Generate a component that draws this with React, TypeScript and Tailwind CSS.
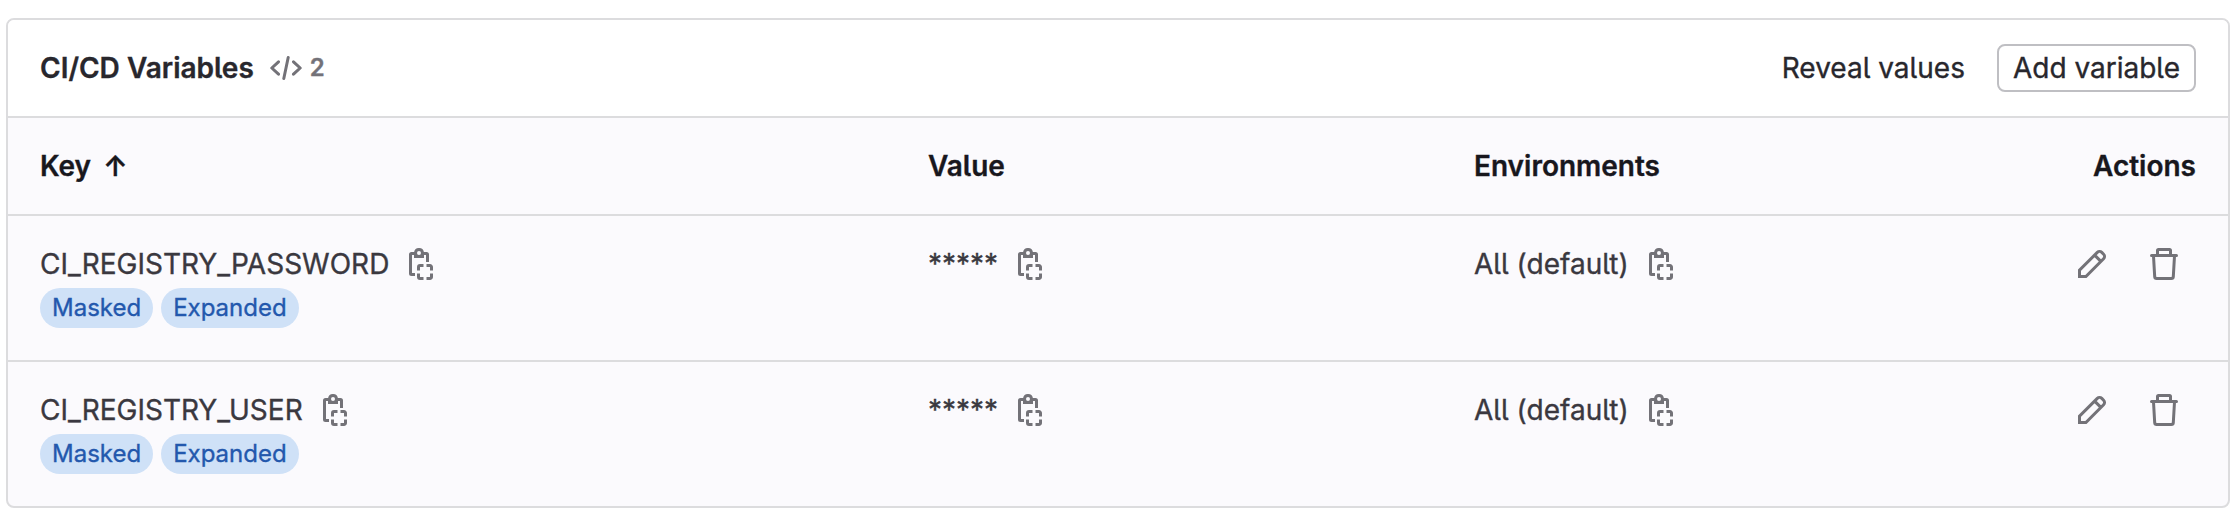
import type { ReactNode } from "react";

const rows = ["CI_REGISTRY_PASSWORD", "CI_REGISTRY_USER"];

function CodeIcon() {
  return (
    <svg className="size-8" viewBox="0 0 16 16" fill="none" stroke="currentColor" strokeWidth="1.5" strokeLinecap="round" strokeLinejoin="round">
      <path d="M9.1 2.75 6.9 13.25M4.25 4.9.9 8l3.35 3.1M11.75 4.9 15.1 8l-3.35 3.1" />
    </svg>
  );
}

function CopyIcon() {
  return (
    <svg className="size-8 shrink-0" viewBox="0 0 16 16" fill="none" stroke="currentColor" strokeWidth="1.5">
      <path
        fill="currentColor"
        stroke="none"
        fillRule="evenodd"
        d="M4.55 2a2.5 2.5 0 0 1 4.9 0H9.5v3h-5V2zM7 3.5a1 1 0 1 0 0-2 1 1 0 0 0 0 2"
      />
      <path d="M5 2.75H3.25a.5.5 0 0 0-.5.5v9.5a.5.5 0 0 0 .5.5H5M9 2.75h1.75a.5.5 0 0 1 .5.5V7" />
      <path d="M6.75 11.25V9.5a.75.75 0 0 1 .75-.75h1.75M10.75 8.75h1.75a.75.75 0 0 1 .75.75v1.75M13.25 12.75v1.75a.75.75 0 0 1-.75.75h-1.75M9.25 15.25H7.5a.75.75 0 0 1-.75-.75v-1.75" />
    </svg>
  );
}

function PencilIcon() {
  return (
    <svg className="size-8" viewBox="0 0 16 16" fill="none" stroke="currentColor" strokeWidth="1.5">
      <path d="M1.75 14.25v-3.2l8.9-8.85a1.6 1.6 0 0 1 2.25 0l.9.9a1.6 1.6 0 0 1 0 2.25L4.95 14.25zM9.3 3.55l3.15 3.15" />
    </svg>
  );
}

function TrashIcon() {
  return (
    <svg className="size-8" viewBox="0 0 16 16" fill="none" stroke="currentColor" strokeWidth="1.5" strokeLinecap="round" strokeLinejoin="round">
      <path d="M1.75 3.75h12.5M4.75 3.5V1.25a.5.5 0 0 1 .5-.5h5.5a.5.5 0 0 1 .5.5V3.5M2.75 4l.6 10.3a1 1 0 0 0 1 .95h7.3a1 1 0 0 0 1-.95L13.25 4" />
    </svg>
  );
}

function Copyable({ children }: { children: ReactNode }) {
  return (
    <div className="flex h-8 items-center gap-4">
      <span>{children}</span>
      <button className="text-[#737278]">
        <CopyIcon />
      </button>
    </div>
  );
}

function Badge({ children }: { children: ReactNode }) {
  return (
    <span className="flex h-10 items-center rounded-full bg-[#cfe1f7] px-3 text-2xl leading-8 text-[#2358ad]">
      {children}
    </span>
  );
}

const grid = "grid grid-cols-[888px_546px_1fr_auto] px-8";

export default function App() {
  return (
    <div className="h-[522px] bg-white pt-[18px] pr-2 pl-1.5 font-['Inter',sans-serif] text-[28px] leading-8 text-[#3a383f] [-webkit-text-stroke:0.35px_currentColor] [font-feature-settings:'cv05']">
      <section className="overflow-hidden rounded-lg border-2 border-[#dcdcde] bg-[#fbfafd]">
        <header className="flex h-[98px] items-center justify-between border-b-2 border-[#dcdcde] bg-white px-8 text-[#28272d]">
          <div className="flex items-center">
            <h2 className="font-semibold">CI/CD Variables</h2>
            <div className="ml-4 flex items-center gap-2 text-2xl font-semibold text-[#737278]">
              <CodeIcon />
              <span>2</span>
            </div>
          </div>
          <div className="flex items-center gap-8">
            <button>Reveal values</button>
            <button className="h-12 rounded-lg border-2 border-[#bfbfc3] px-3.5">Add variable</button>
          </div>
        </header>
        <div className={`${grid} h-[98px] items-center border-b-2 border-[#dcdcde] font-semibold text-[#18171d]`}>
          <div className="flex gap-3">
            <span>Key</span>
            <span>↑</span>
          </div>
          <div>Value</div>
          <div>Environments</div>
          <div>Actions</div>
        </div>
        {rows.map((name) => (
          <div key={name} className={`${grid} border-b-2 border-[#dcdcde] py-8 last:border-b-0`}>
            <div>
              <Copyable>{name}</Copyable>
              <div className="mt-2 flex gap-2">
                <Badge>Masked</Badge>
                <Badge>Expanded</Badge>
              </div>
            </div>
            <Copyable>*****</Copyable>
            <Copyable>All (default)</Copyable>
            <div className="flex h-8 gap-10 pr-4 text-[#737278]">
              <button>
                <PencilIcon />
              </button>
              <button>
                <TrashIcon />
              </button>
            </div>
          </div>
        ))}
      </section>
    </div>
  );
}
